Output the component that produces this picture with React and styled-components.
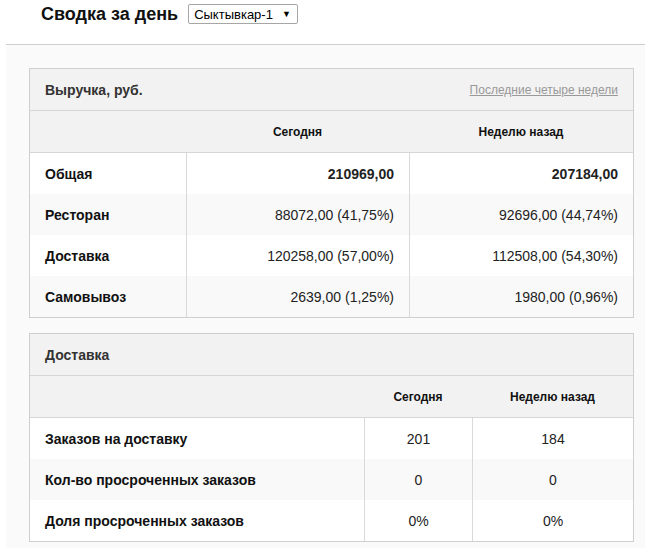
import React from "react";
import styled, { createGlobalStyle } from "styled-components";

const GlobalStyle = createGlobalStyle`
  body {
    margin: 0;
    background: #fff;
    font-family: "Liberation Sans", Arial, sans-serif;
    color: #000;
  }
`;

// Top bar with the title and city select
const TopBar = styled.div`
  height: 44px;
  padding: 4px 0 0 41px;
  box-sizing: border-box;
  display: flex;
  align-items: flex-start;
  gap: 10px;
`;

const PageTitle = styled.h1`
  margin: 0;
  font-size: 18px;
  line-height: 20px;
  font-weight: bold;
  color: #111;
`;

const FakeSelect = styled.div`
  height: 20px;
  padding: 0 6px 0 5px;
  box-sizing: border-box;
  border: 1px solid #a6a6a6;
  border-radius: 2px;
  display: flex;
  align-items: center;
  gap: 9px;
  font-size: 13px;
  color: #000;
  background: #fff;
`;

const Arrow = styled.span`
  font-size: 9px;
  line-height: 1;
`;

// Gray working area
const Content = styled.div`
  margin: 0 5px 0 6px;
  border-top: 1px solid #cdcdcd;
  background: #fafafa;
  padding: 23px 11px 6px 23px;
  display: flex;
  flex-direction: column;
  gap: 15px;
`;

const Panel = styled.div`
  border: 1px solid #cfcfcf;
  background: #fff;
`;

const PanelHead = styled.div`
  height: 41px;
  padding: 0 15px;
  background: #f2f2f2;
  border-bottom: 1px solid #d6d6d6;
  display: flex;
  align-items: center;
  justify-content: space-between;
`;

const PanelTitle = styled.span`
  font-size: 14px;
  font-weight: bold;
  color: #333;
`;

const HeadLink = styled.a`
  font-size: 12px;
  color: #999;
  text-decoration: underline;
  cursor: pointer;
`;

const Table = styled.table`
  width: 100%;
  border-collapse: separate;
  border-spacing: 0;
  table-layout: fixed;
`;

const Th = styled.th`
  height: 41px;
  padding: 0;
  background: #f2f2f2;
  border-bottom: 1px solid #d6d6d6;
  font-size: 12px;
  font-weight: bold;
  color: #111;
  text-align: center;
`;

const Row = styled.tr`
  background: ${(p) => (p.$striped ? "#f9f9f9" : "#fff")};
`;

const Label = styled.td`
  height: 41px;
  padding: 0 15px;
  font-size: 14px;
  font-weight: bold;
  color: #111;
`;

const Cell = styled.td`
  height: 41px;
  padding: 0 15px;
  border-left: 1px solid #d9d9d9;
  font-size: 14px;
  font-weight: ${(p) => (p.$bold ? "bold" : "normal")};
  text-align: ${(p) => p.$align || "right"};
  color: #222;
`;

const revenue = [
  { label: "Общая", today: "210969,00", week: "207184,00", bold: true },
  { label: "Ресторан", today: "88072,00 (41,75%)", week: "92696,00 (44,74%)" },
  { label: "Доставка", today: "120258,00 (57,00%)", week: "112508,00 (54,30%)" },
  { label: "Самовывоз", today: "2639,00 (1,25%)", week: "1980,00 (0,96%)" },
];

const delivery = [
  { label: "Заказов на доставку", today: "201", week: "184" },
  { label: "Кол-во просроченных заказов", today: "0", week: "0" },
  { label: "Доля просроченных заказов", today: "0%", week: "0%" },
];

export default function App() {
  return (
    <>
      <GlobalStyle />
      <TopBar>
        <PageTitle>Сводка за день</PageTitle>
        <FakeSelect>
          Сыктывкар-1 <Arrow>▼</Arrow>
        </FakeSelect>
      </TopBar>

      <Content>
        <Panel>
          <PanelHead>
            <PanelTitle>Выручка, руб.</PanelTitle>
            <HeadLink>Последние четыре недели</HeadLink>
          </PanelHead>
          <Table>
            <colgroup>
              <col style={{ width: 156 }} />
              <col style={{ width: 223 }} />
              <col style={{ width: 224 }} />
            </colgroup>
            <thead>
              <tr>
                <Th></Th>
                <Th>Сегодня</Th>
                <Th>Неделю назад</Th>
              </tr>
            </thead>
            <tbody>
              {revenue.map((r, i) => (
                <Row key={r.label} $striped={i % 2 === 1}>
                  <Label>{r.label}</Label>
                  <Cell $bold={r.bold}>{r.today}</Cell>
                  <Cell $bold={r.bold}>{r.week}</Cell>
                </Row>
              ))}
            </tbody>
          </Table>
        </Panel>

        <Panel>
          <PanelHead>
            <PanelTitle>Доставка</PanelTitle>
          </PanelHead>
          <Table>
            <colgroup>
              <col style={{ width: 334 }} />
              <col style={{ width: 108 }} />
              <col style={{ width: 161 }} />
            </colgroup>
            <thead>
              <tr>
                <Th></Th>
                <Th>Сегодня</Th>
                <Th>Неделю назад</Th>
              </tr>
            </thead>
            <tbody>
              {delivery.map((r, i) => (
                <Row key={r.label} $striped={i % 2 === 1}>
                  <Label>{r.label}</Label>
                  <Cell $align="center">{r.today}</Cell>
                  <Cell $align="center">{r.week}</Cell>
                </Row>
              ))}
            </tbody>
          </Table>
        </Panel>
      </Content>
    </>
  );
}
